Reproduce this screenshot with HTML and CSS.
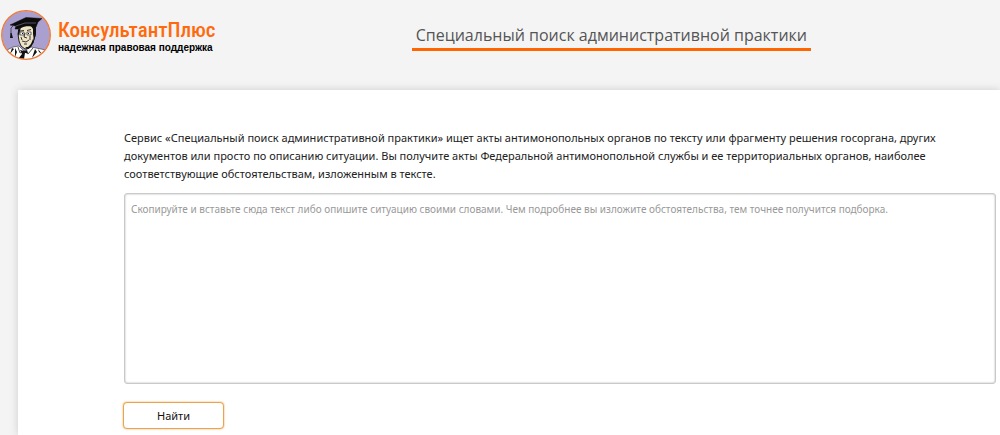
FILE: index.html
```html
<!DOCTYPE html>
<html lang="ru">
<head>
<meta charset="utf-8">
<meta name="viewport" content="width=device-width, initial-scale=1">
<title>Специальный поиск административной практики</title>
<link rel="stylesheet" href="styles.css">
</head>
<body>
<header class="header">
  <a class="brand" href="#">
    <svg class="brand-mark" viewBox="0 0 52 52" aria-hidden="true">
      <defs><clipPath id="disc"><circle cx="26" cy="26" r="24"/></clipPath></defs>
      <circle cx="26" cy="26" r="24" fill="#a9a0d0"/>
      <g clip-path="url(#disc)">
        <path d="M4 52 7 41 13 38 19 37 24 42 31 38 36 39 46 41 46 52Z" fill="#fff" stroke="#333" stroke-width=".6"/>
        <path d="M19 19 18 25 19 32 21 37 25 40 29 39 33 33 35 27 35 18 28 16Z" fill="#efe3c6" stroke="#111" stroke-width=".9"/>
        <path d="M31 17 36 17 36 25 34 32 33 25 33 20ZM18 21 21 18 20 22 19 27 18 25Z" fill="#111"/>
        <path d="M33 30 31 35 28 38 25 38 28 40 31 38 34 33Z" fill="#111"/>
        <path d="M20 22 24 21.500M27 21.500 31 20.500M25 24 24 28 27 29M22 32 26 33 29 31M30 27 30 31M21 28 22 31M24 35 27 35" fill="none" stroke="#222" stroke-width=".9"/>
        <path d="M20 23h4v3h-4zM27 23h4v3h-4z" fill="#fff" stroke="#222" stroke-width=".7"/>
        <path d="M22 24.500h1M28 24.500h1" stroke="#111"/>
        <path d="M18 38 20 44 24 42 28 45 33 39" fill="none" stroke="#222" stroke-width=".8"/>
        <path d="M12 39 10 45 14 40ZM15 39 15 48 17 43ZM35 40 32 49 37 43ZM38 40 42 45 39 43Z" fill="#111"/>
        <path d="M20 41 24 42 27 41 28 44 25 44 24 50 18 50 22 45Z" fill="#111"/>
      </g>
      <path d="M10 16 26 8.500 42 9.500 38 13 36 18 31 17 24 17 18 20 15 20 16 17Z" fill="#0c0c0c" stroke="#0c0c0c" stroke-width=".5" stroke-linejoin="round"/>
      <path d="M16 17 25 14 36 14" fill="none" stroke="#858090" stroke-width=".6"/>
      <path d="M13 17 11 19 11 25" fill="none" stroke="#222" stroke-width=".7"/>
      <path d="M10.500 24h1l1.500 5h-3z" fill="#111"/>
      <circle cx="26" cy="26" r="24.300" fill="none" stroke="#f17832" stroke-width="1.300"/>
    </svg>
    <span class="brand-text">
      <span class="brand-name">КонсультантПлюс</span>
      <span class="brand-slogan">надежная правовая поддержка</span>
    </span>
  </a>
  <h1 class="title">Специальный поиск административной практики</h1>
</header>
<main class="panel">
  <form class="search">
    <label class="intro" for="query">Сервис «Специальный поиск административной практики» ищет акты антимонопольных органов по тексту или фрагменту решения госоргана, других документов или просто по описанию ситуации. Вы получите акты Федеральной антимонопольной службы и ее территориальных органов, наиболее соответствующие обстоятельствам, изложенным в тексте.</label>
    <textarea class="query" id="query" placeholder="Скопируйте и вставьте сюда текст либо опишите ситуацию своими словами. Чем подробнее вы изложите обстоятельства, тем точнее получится подборка."></textarea>
    <button class="submit" type="button">Найти</button>
  </form>
</main>
</body>
</html>
```
FILE: styles.css
```css
* { box-sizing: border-box; }

body {
  margin: 0;
  min-height: 100vh;
  display: flex;
  flex-direction: column;
  background: #f4f4f4;
  color: #222;
  font: 11px/18px "Noto Sans", "Open Sans", sans-serif;
}

.header {
  display: grid;
  grid-template-columns: 1fr auto;
  align-items: start;
  padding: 9px 189px 29px 0;
}

.brand {
  display: flex;
  gap: 6px;
  color: #000;
  text-decoration: none;
}

.brand-mark {
  width: 52px;
  height: 52px;
}

.brand-text {
  display: flex;
  flex-direction: column;
  padding-top: 9px;
  white-space: nowrap;
}

.brand-name {
  color: #ff6a0d;
  font: 500 21px/24px "Roboto Condensed", "Roboto", "Liberation Sans", sans-serif;
}

.brand-slogan {
  font: bold 10px/12px "Liberation Sans", sans-serif;
}

.title {
  margin: 14px 0 0;
  padding: 0 4px 1px;
  border-bottom: 3px solid #ff6600;
  color: #555;
  font-family: "Open Sans", "Noto Sans", sans-serif;
  font-size: 16px;
  font-weight: 400;
  line-height: 24px;
}

.panel {
  flex: 1;
  margin-left: 18px;
  padding: 39px 4px 6px 106px;
  background: #fff;
  box-shadow: 0 0 8px #ccc;
}

.search {
  display: flex;
  flex-direction: column;
  align-items: flex-start;
}

.intro {
  max-width: 824px;
}

.query {
  display: block;
  width: 100%;
  height: 191px;
  margin-top: 10px;
  padding: 6px;
  border: 1px solid #c8caca;
  border-radius: 3px;
  box-shadow: inset 0 0 2px #aaa;
  background: #fff;
  color: #222;
  font: 10px/18px "Noto Sans", "Open Sans", sans-serif;
  resize: none;
}

.query::placeholder {
  color: #999;
  opacity: 1;
}

.submit {
  width: 101px;
  height: 27px;
  margin: 18px 0 0 -1px;
  border: 1px solid #e9a54d;
  border-radius: 4px;
  box-shadow: 0 0 2px #e9a54d;
  background: #fff;
  color: #111;
  font: 11px/18px "Noto Sans", "Open Sans", sans-serif;
}
```
